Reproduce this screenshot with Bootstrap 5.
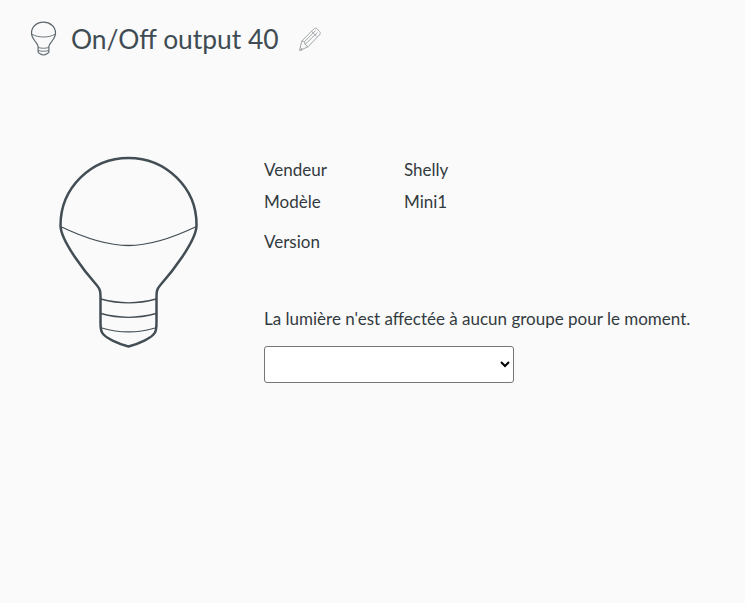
<!DOCTYPE html>
<html lang="fr">
<head>
<meta charset="utf-8">
<title>On/Off output 40</title>
<link href="https://cdn.jsdelivr.net/npm/bootstrap@5.3.0/dist/css/bootstrap.min.css" rel="stylesheet">
<style>
body{background:#fafafa;color:#333a3f;font-family:"Lato","Liberation Sans",sans-serif;font-size:17px;line-height:24px;}
.page-head{padding:21px 0 0 30px;height:156px;}
.head-bulb{width:27px;height:35px;flex:none;}
.head-title{font-size:26.4px;line-height:36px;font-weight:400;color:#3f4c53;margin:0 0 0 14px;}
.head-pencil{width:24px;height:26px;flex:none;margin:5px 0 0 19px;}
.detail-wrap{padding-left:58px;}
.big-bulb{width:142px;height:192px;flex:none;margin-right:64px;}
.info-block{padding-top:2px;}
.info-line{height:32px;}
.info-key{width:140px;}
.info-gap{margin-top:8px;}
.group-note{margin:45px 0 15px;}
.group-select{display:block;width:250px;height:37px;background:#fff;border:1px solid #767676;border-radius:3px;}
</style>
</head>
<body>
<header class="page-head d-flex align-items-start">
  <svg class="head-bulb" viewBox="0 0 27 35" fill="none" stroke="#5b666c" stroke-width="1.2">
    <path d="M13.5 1.2C6.8 1.2 1.500 5.800 1.500 12.200c0 3 1.700 5.400 3.400 7.800 1.400 2 3 3.400 3.200 5.200v5.800c0 .8 3.200 3 5.400 3s5.400-2.200 5.400-3v-5.800c.2-1.800 1.800-3.200 3.200-5.200 1.700-2.400 3.400-4.800 3.400-7.800 0-6.400-5.300-11-12-11z"/>
    <path d="M1.600 13c3.700 2.300 8 3 11.900 3s8.200-.7 11.900-3M8.200 26.500c3.400 1 7.200 1 10.600 0M8.200 29.500c3.400 1 7.200 1 10.600 0" stroke-width=".9"/>
  </svg>
  <h1 class="head-title">On/Off output 40</h1>
  <svg class="head-pencil" viewBox="0 0 24 26" fill="none" stroke="#a3a7a9" stroke-width="1">
    <path d="M1.500 24.500l2.300-9.500L15.500 3.200c1.200-1.200 2.500-1.300 3.500-.3l2.600 2.600c1 1 .9 2.300-.3 3.500L10 20.800z"/>
    <path d="M3.800 15l2.700.6.500 2.900 3 2.300M6.500 15.600L17.500 4.600M7 18.500L19.500 6.500M13.500 5.200l5.300 5.300M1.500 24.500l3.100-.8-2.200-2.300"/>
  </svg>
</header>
<main class="detail-wrap d-flex align-items-start">
  <svg class="big-bulb" viewBox="58 156 142 192" fill="none" stroke="#434e54" stroke-width="2.500" stroke-linejoin="round">
    <path d="M128.500 158C91 158 60.500 188 60.500 225.500c0 9 7 20.500 14 31 8 12 15 20.500 22.500 29 3.500 4 3.500 7 3.500 12V322c0 5 0 8 1.500 10.500 3 5.500 16.500 11.500 26.500 14 10-2.500 23.500-8.500 26.500-14 1.500-2.500 1.500-5.500 1.500-10.500v-24.500c0-5 0-8 3.500-12 7.500-8.500 14.500-17 22.500-29 7-10.500 14-22 14-31C197 188 166 158 128.500 158z"/>
    <path d="M60.500 226.500c22 10.500 46 19 68 19s46-8.500 68-19M101 299c18 5 37 5 55 0M101 313.500c18 5 37 5 55 0M102 328c17 5 36 5 53 0" stroke-width="1.300"/>
  </svg>
  <section class="info-block flex-grow-1">
    <div class="info-line d-flex"><div class="info-key">Vendeur</div><div>Shelly</div></div>
    <div class="info-line d-flex"><div class="info-key">Modèle</div><div>Mini1</div></div>
    <div class="info-line info-gap d-flex"><div class="info-key">Version</div><div></div></div>
    <p class="group-note">La lumière n'est affectée à aucun groupe pour le moment.</p>
    <select class="group-select" aria-label="Groupe"><option></option></select>
  </section>
</main>
</body>
</html>
